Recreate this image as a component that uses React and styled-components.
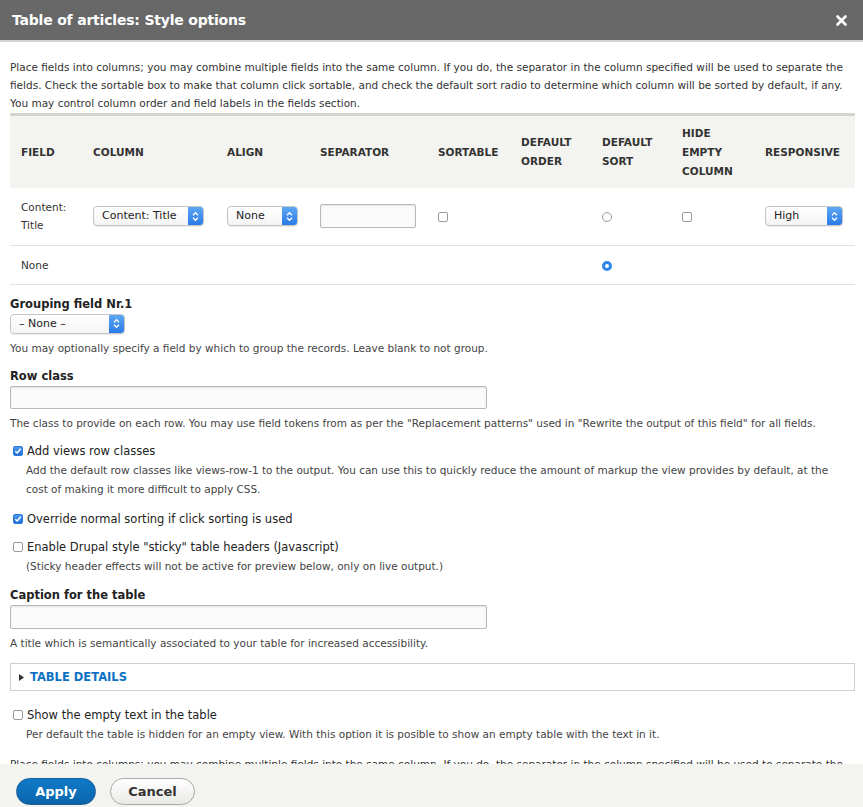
import React from "react";
import styled, { createGlobalStyle } from "styled-components";

const GlobalStyle = createGlobalStyle`
  html, body {
    margin: 0;
    padding: 0;
    background: #ffffff;
  }
  body {
    font-family: "DejaVu Sans", "Liberation Sans", sans-serif;
    font-size: 10.5px;
    color: #333333;
  }
`;

const columns = [
  { label: "Field", width: 83 },
  { label: "Column", width: 134 },
  { label: "Align", width: 93 },
  { label: "Separator", width: 118 },
  { label: "Sortable", width: 83 },
  { label: "Default order", width: 81 },
  { label: "Default sort", width: 80 },
  { label: "Hide empty column", width: 83 },
  { label: "Responsive", width: 90 },
];

const SelectArrows = () => (
  <svg width="7" height="11" viewBox="0 0 7 11">
    <path d="M1 4.2 L3.5 1.7 L6 4.2" fill="none" stroke="#fff" strokeWidth="1.3" />
    <path d="M1 6.8 L3.5 9.3 L6 6.8" fill="none" stroke="#fff" strokeWidth="1.3" />
  </svg>
);

const Select = ({ value, width }) => (
  <SelectBox $width={width}>
    <SelectValue>{value}</SelectValue>
    <SelectButton>
      <SelectArrows />
    </SelectButton>
  </SelectBox>
);

const Check = ({ checked }) => (
  <CheckBox $checked={checked}>
    {checked && (
      <svg width="8" height="8" viewBox="0 0 8 8">
        <path d="M1.3 4.2 L3.2 6 L6.7 1.8" fill="none" stroke="#fff" strokeWidth="1.5" />
      </svg>
    )}
  </CheckBox>
);

const CheckOption = ({ checked, label, children }) => (
  <OptionBlock>
    <OptionLine>
      <Check checked={checked} />
      <OptionLabel>{label}</OptionLabel>
    </OptionLine>
    {children && <OptionDesc>{children}</OptionDesc>}
  </OptionBlock>
);

const App = () => {
  return (
    <Dialog>
      <GlobalStyle />
      <TitleBar>
        <Title>Table of articles: Style options</Title>
        <svg width="11" height="11" viewBox="0 0 11 11">
          <path d="M1.5 1.5 L9.5 9.5 M9.5 1.5 L1.5 9.5" stroke="#fff" strokeWidth="2.6" strokeLinecap="round" />
        </svg>
      </TitleBar>

      <Content>
        <Intro>
          Place fields into columns; you may combine multiple fields into the same column. If you do, the
          separator in the column specified will be used to separate the fields. Check the sortable box to
          make that column click sortable, and check the default sort radio to determine which column will
          be sorted by default, if any. You may control column order and field labels in the fields section.
        </Intro>

        <Table>
          <colgroup>
            {columns.map((c) => (
              <col key={c.label} style={{ width: c.width }} />
            ))}
          </colgroup>
          <thead>
            <tr>
              {columns.map((c) => (
                <Th key={c.label}>{c.label}</Th>
              ))}
            </tr>
          </thead>
          <tbody>
            <BodyRow $height={57}>
              <Td>Content: Title</Td>
              <Td>
                <Select value="Content: Title" width={111} />
              </Td>
              <Td>
                <Select value="None" width={71} />
              </Td>
              <Td>
                <TextInput $width={96} />
              </Td>
              <Td>
                <Check />
              </Td>
              <Td />
              <Td>
                <Radio />
              </Td>
              <Td>
                <Check />
              </Td>
              <Td>
                <Select value="High" width={78} />
              </Td>
            </BodyRow>
            <BodyRow $height={39}>
              <Td>None</Td>
              <Td />
              <Td />
              <Td />
              <Td />
              <Td />
              <Td>
                <Radio $checked />
              </Td>
              <Td />
              <Td />
            </BodyRow>
          </tbody>
        </Table>

        <Field>
          <Label>Grouping field Nr.1</Label>
          <Select value="– None –" width={115} />
          <Description>You may optionally specify a field by which to group the records. Leave blank to not group.</Description>
        </Field>

        <Field>
          <Label>Row class</Label>
          <TextInput $width={477} $height={23} />
          <Description>
            The class to provide on each row. You may use field tokens from as per the "Replacement patterns" used
            in "Rewrite the output of this field" for all fields.
          </Description>
        </Field>

        <CheckOption checked label="Add views row classes">
          Add the default row classes like views-row-1 to the output. You can use this to quickly reduce the amount
          of markup the view provides by default, at the cost of making it more difficult to apply CSS.
        </CheckOption>

        <CheckOption checked label="Override normal sorting if click sorting is used" />

        <CheckOption label={'Enable Drupal style "sticky" table headers (Javascript)'}>
          (Sticky header effects will not be active for preview below, only on live output.)
        </CheckOption>

        <Field>
          <Label>Caption for the table</Label>
          <TextInput $width={477} $height={24} />
          <Description>A title which is semantically associated to your table for increased accessibility.</Description>
        </Field>

        <Details>
          <Summary>
            <svg width="5" height="7" viewBox="0 0 5 7">
              <path d="M0 0 L5 3.5 L0 7 Z" fill="#333" />
            </svg>
            <span>Table details</span>
          </Summary>
        </Details>

        <CheckOption label="Show the empty text in the table">
          Per default the table is hidden for an empty view. With this option it is posible to show an empty table
          with the text in it.
        </CheckOption>

        <Intro>
          Place fields into columns; you may combine multiple fields into the same column. If you do, the
          separator in the column specified will be used to separate the fields.
        </Intro>
      </Content>

      <Footer>
        <Button $primary $width={80}>
          Apply
        </Button>
        <Button $width={85}>Cancel</Button>
      </Footer>
    </Dialog>
  );
};

export default App;

const Dialog = styled.div`
  width: 863px;
  height: 807px;
  display: flex;
  flex-direction: column;
  overflow: hidden;
  background: #ffffff;
`;

const TitleBar = styled.div`
  height: 40px;
  flex: none;
  display: flex;
  align-items: center;
  justify-content: space-between;
  padding: 0 16px 0 12px;
  background: #686868;
  border-bottom: 2px solid #d3d3d3;
`;

const Title = styled.h1`
  margin: 0;
  font-size: 14px;
  letter-spacing: -0.2px;
  font-weight: bold;
  color: #ffffff;
`;

const Content = styled.div`
  flex: 1;
  min-height: 0;
  overflow: hidden;
  padding: 16px 10px 0 10px;
`;

const Intro = styled.p`
  margin: 0 0 1px 0;
  line-height: 18px;
  color: #333333;
`;

const Table = styled.table`
  width: 845px;
  table-layout: fixed;
  border-collapse: collapse;
  margin-bottom: 10px;
`;

const Th = styled.th`
  height: 72px;
  padding: 0 14px 0 0;
  text-align: left;
  vertical-align: middle;
  background: #f3f3f0;
  border-top: 3px solid #d4d4cf;
  font-size: 10.5px;
  font-weight: bold;
  text-transform: uppercase;
  line-height: 19px;
  color: #333333;

  &:first-child {
    padding-left: 11px;
  }
`;

const BodyRow = styled.tr`
  height: ${(p) => p.$height}px;
  border-bottom: 1px solid #e2e2de;
`;

const Td = styled.td`
  padding: 0 10px 0 0;
  vertical-align: middle;
  line-height: 18px;
  color: #333333;

  &:first-child {
    padding-left: 11px;
  }
`;

const SelectBox = styled.div`
  box-sizing: border-box;
  width: ${(p) => p.$width}px;
  height: 20px;
  display: inline-flex;
  align-items: stretch;
  border: 1px solid #c5c5c5;
  border-radius: 4px;
  background: linear-gradient(#ffffff, #f4f4f4);
  box-shadow: 0 1px 1px rgba(0, 0, 0, 0.08);
  overflow: hidden;
  vertical-align: middle;
`;

const SelectValue = styled.span`
  flex: 1;
  display: flex;
  align-items: center;
  padding-left: 8px;
  font-size: 11px;
  color: #222222;
  white-space: nowrap;
`;

const SelectButton = styled.span`
  width: 15px;
  display: flex;
  align-items: center;
  justify-content: center;
  background: linear-gradient(#5ea7f5, #2a7ae6);
`;

const TextInput = styled.div`
  box-sizing: border-box;
  width: ${(p) => p.$width}px;
  height: ${(p) => p.$height || 24}px;
  border: 1px solid #b9b9b9;
  border-radius: 2px;
  background: #fbfbfb;
  box-shadow: inset 0 1px 2px rgba(0, 0, 0, 0.1);
`;

const CheckBox = styled.span`
  box-sizing: border-box;
  width: 10px;
  height: 10px;
  flex: none;
  display: inline-flex;
  align-items: center;
  justify-content: center;
  border: 1px solid ${(p) => (p.$checked ? "#2b78d8" : "#9a9a9a")};
  border-radius: 2px;
  background: ${(p) => (p.$checked ? "linear-gradient(#4d9af0, #1f6fd8)" : "#ffffff")};
  vertical-align: middle;
`;

const Radio = styled.span`
  box-sizing: border-box;
  display: inline-block;
  width: 10px;
  height: 10px;
  border-radius: 50%;
  border: ${(p) => (p.$checked ? "3px solid #2d86ee" : "1px solid #9a9a9a")};
  background: #ffffff;
  vertical-align: middle;
`;

const Field = styled.div`
  margin: 0 0 10px 0;
`;

const Label = styled.div`
  font-size: 11.5px;
  font-weight: bold;
  color: #222222;
  line-height: 18px;
  margin-bottom: 1px;
`;

const Description = styled.div`
  margin-top: 5px;
  line-height: 18px;
  color: #444444;
`;

const OptionBlock = styled.div`
  margin: 0 0 10px 0;
`;

const OptionLine = styled.div`
  display: flex;
  align-items: center;
  gap: 4px;
  padding-left: 3px;
  height: 18px;
`;

const OptionLabel = styled.span`
  font-size: 11.5px;
  color: #222222;
`;

const OptionDesc = styled.div`
  margin-top: 1px;
  padding-left: 16px;
  line-height: 19.5px;
  color: #444444;
`;

const Details = styled.div`
  box-sizing: border-box;
  width: 845px;
  height: 28px;
  border: 1px solid #cfcfcf;
  margin: 11px 0 15px 0;
  display: flex;
  align-items: center;
  padding-left: 8px;
`;

const Summary = styled.div`
  display: flex;
  align-items: center;
  gap: 6px;
  font-size: 11.5px;
  font-weight: bold;
  text-transform: uppercase;
  color: #0d72c4;
`;

const Footer = styled.div`
  height: 43px;
  flex: none;
  display: flex;
  align-items: center;
  gap: 14px;
  padding: 0 16px;
  background: #f3f3f0;
`;

const Button = styled.button`
  box-sizing: border-box;
  width: ${(p) => p.$width}px;
  height: 27px;
  margin-top: 12px;
  padding: 0;
  border-radius: 14px;
  border: 1px solid ${(p) => (p.$primary ? "#1c5e97" : "#a9a9a9")};
  background: ${(p) => (p.$primary ? "linear-gradient(#0f7ac8, #0a65ab)" : "linear-gradient(#ffffff, #e9e9e6)")};
  color: ${(p) => (p.$primary ? "#ffffff" : "#333333")};
  font-family: "DejaVu Sans", "Liberation Sans", sans-serif;
  font-size: 13px;
  font-weight: bold;
`;
